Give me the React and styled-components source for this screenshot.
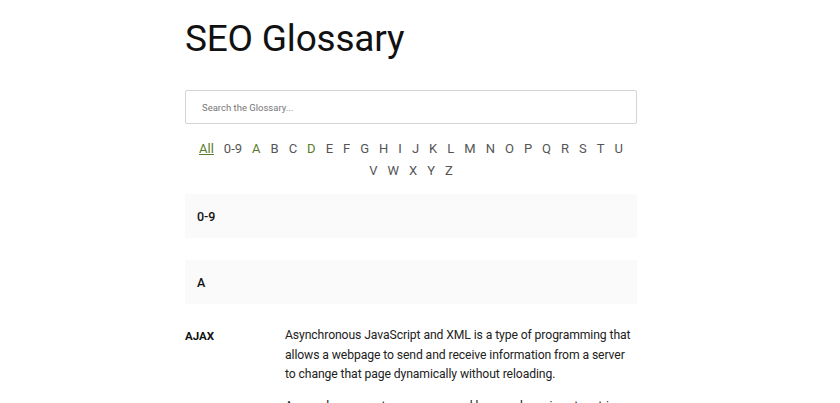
import React from 'react'
import styled, { createGlobalStyle } from 'styled-components'

const GlobalStyle = createGlobalStyle`
  html, body {
    margin: 0;
    padding: 0;
    background: #fff;
  }
  body {
    font-family: Roboto, 'Open Sans', sans-serif;
    color: #222;
  }
`
const Viewport = styled.div`
  padding-right: 18px;
`
const Page = styled.div`
  width: 452px;
  margin: 0 auto;
  padding-top: 17px;
`
const Title = styled.h1`
  font-size: 37px;
  font-weight: 400;
  letter-spacing: -0.2px;
  line-height: 44px;
  margin: 0 0 29px;
  color: #111;
`
const Search = styled.input`
  display: block;
  box-sizing: border-box;
  width: 100%;
  height: 34px;
  padding: 0 16px;
  border: 1px solid #d4d4d4;
  border-radius: 2px;
  font-family: Roboto, sans-serif;
  font-size: 9.5px;
  color: #333;
  &::placeholder {
    color: #777;
  }
`
const Letters = styled.nav`
  display: flex;
  flex-wrap: wrap;
  justify-content: center;
  gap: 0 10px;
  margin: 14px 0 12px;
  padding: 0 8px;
`
const Letter = styled.a`
  font-size: 13px;
  line-height: 22px;
  color: ${p => (p.active ? '#5b7a2b' : '#555')};
  text-decoration: ${p => (p.current ? 'underline' : 'none')};
`
const SectionHead = styled.div`
  background: #fafafa;
  height: 44px;
  display: flex;
  align-items: center;
  padding: 0 12px;
  font-size: 12.5px;
  font-weight: 500;
  color: #111;
  margin-bottom: 22px;
`
const Entry = styled.div`
  display: grid;
  grid-template-columns: 100px 1fr;
  margin-top: 12px;
  margin-bottom: 4px;
`
const Term = styled.div`
  font-size: 11.5px;
  font-weight: 700;
  line-height: 20px;
  color: #111;
`
const Definition = styled.p`
  margin: 0;
  font-size: 12.2px;
  letter-spacing: -0.1px;
  line-height: 19.5px;
  color: #222;
`

const letters = ['0-9', ...'ABCDEFGHIJKLMNOPQRSTUVWXYZ'.split('')]
const withContent = ['A', 'D']

const entries = [
  {
    term: 'AJAX',
    text:
      'Asynchronous JavaScript and XML is a type of programming that allows a webpage to send and receive information from a server to change that page dynamically without reloading.'
  },
  {
    term: 'ALGORITHM',
    text: 'A complex computer program used by search engines to retrieve data and deliver results for a query.'
  }
]

export default function App() {
  return (
    <>
      <GlobalStyle />
      <Viewport>
        <Page>
          <Title>SEO Glossary</Title>
          <Search placeholder="Search the Glossary..." />
          <Letters>
            <Letter href="#" active current>
              All
            </Letter>
            {letters.map(l => (
              <Letter key={l} href="#" active={withContent.includes(l)}>
                {l}
              </Letter>
            ))}
          </Letters>
          <SectionHead>0-9</SectionHead>
          <SectionHead>A</SectionHead>
          {entries.map(e => (
            <Entry key={e.term}>
              <Term>{e.term}</Term>
              <Definition>{e.text}</Definition>
            </Entry>
          ))}
        </Page>
      </Viewport>
    </>
  )
}
